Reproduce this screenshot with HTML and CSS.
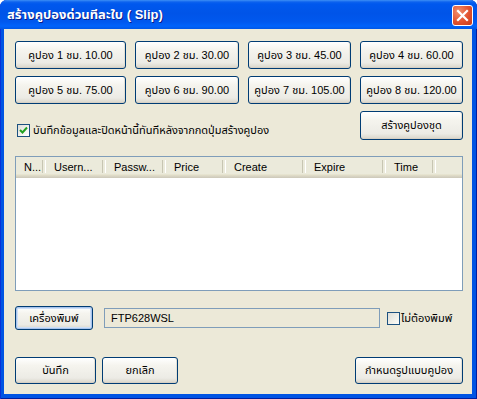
FILE: index.html
```html
<!DOCTYPE html>
<html lang="th">
<head>
<meta charset="utf-8">
<title>Slip</title>
<link rel="stylesheet" href="styles.css">
</head>
<body>
<div class="window">
  <div class="titlebar">
    <span class="title">สร้างคูปองด่วนทีละใบ ( Slip)</span>
    <span class="close"><svg width="13" height="13" viewBox="0 0 13 13"><path d="M2 2 L11 11 M11 2 L2 11" stroke="#fff" stroke-width="2.2" stroke-linecap="square"/></svg></span>
  </div>
  <div class="client">
    <div class="coupons">
      <button class="btn">คูปอง 1 ชม. 10.00</button>
      <button class="btn">คูปอง 2 ชม. 30.00</button>
      <button class="btn">คูปอง 3 ชม. 45.00</button>
      <button class="btn">คูปอง 4 ชม. 60.00</button>
      <button class="btn">คูปอง 5 ชม. 75.00</button>
      <button class="btn">คูปอง 6 ชม. 90.00</button>
      <button class="btn">คูปอง 7 ชม. 105.00</button>
      <button class="btn">คูปอง 8 ชม. 120.00</button>
    </div>
    <div class="optrow">
      <label class="check">
        <span class="box checked"><svg width="9" height="9" viewBox="0 0 9 9"><path d="M1 4 L3.5 6.5 L8 1.5" fill="none" stroke="#21a121" stroke-width="2"/></svg></span>
        <span>บันทึกข้อมูลและปิดหน้านี้ทันทีหลังจากกดปุ่มสร้างคูปอง</span>
      </label>
      <button class="btn batch">สร้างคูปองชุด</button>
    </div>
    <div class="list">
      <div class="head">
        <span class="col c1">N...</span>
        <span class="col c2">Usern...</span>
        <span class="col c3">Passw...</span>
        <span class="col c4">Price</span>
        <span class="col c5">Create</span>
        <span class="col c6">Expire</span>
        <span class="col c7">Time</span>
      </div>
      <div class="body"></div>
    </div>
    <div class="printrow">
      <button class="btn default printer">เครื่องพิมพ์</button>
      <div class="field">FTP628WSL</div>
      <label class="check noprint">
        <span class="box"></span>
        <span>ไม่ต้องพิมพ์</span>
      </label>
    </div>
    <div class="bottomrow">
      <button class="btn save">บันทึก</button>
      <button class="btn cancel">ยกเลิก</button>
      <span class="spacer"></span>
      <button class="btn format">กำหนดรูปแบบคูปอง</button>
    </div>
  </div>
</div>
</body>
</html>
```

FILE: styles.css
```css
* { box-sizing: border-box; }
html, body { margin: 0; padding: 0; }
body {
  width: 477px;
  height: 399px;
  overflow: hidden;
  font-family: "Liberation Sans", "Noto Sans Thai", "Tahoma", sans-serif;
  font-size: 11px;
  color: #000;
}
.window {
  width: 477px;
  height: 399px;
  display: flex;
  flex-direction: column;
  background: #0054e3;
  box-shadow: inset 1px 0 0 #0831d9, inset -1px 0 0 #001ea0, inset 0 -1px 0 #001ea0;
  border-radius: 7px 7px 0 0;
  overflow: hidden;
}
.titlebar {
  height: 29px;
  flex: none;
  display: flex;
  align-items: center;
  padding: 0 4px 0 7px;
  background: linear-gradient(to bottom, #3d8ff5 0, #0d62ee 2px, #0058ee 4px, #0054e8 45%, #0058ee 75%, #0063fb 90%, #0057e6 100%);
}
.title {
  flex: 1;
  color: #fff;
  font-weight: bold;
  font-size: 13px;
  text-shadow: 1px 1px 0 #0a1e8a;
  padding-top: 1px;
}
.close {
  width: 21px;
  height: 21px;
  border: 1px solid #fff;
  border-radius: 3px;
  background: radial-gradient(circle at 30% 30%, #f0906e 0, #e2522f 55%, #c53b1c 100%);
  display: flex;
  align-items: center;
  justify-content: center;
  margin-top: 2px;
}
.client {
  flex: 1;
  margin: 0 5px 5px 4px;
  background: #ece9d8;
  padding: 12px 9px 10px 11px;
  display: flex;
  flex-direction: column;
}
.btn {
  font: inherit;
  color: #000;
  border: 1px solid #003c74;
  border-radius: 3px;
  background: linear-gradient(to bottom, #ffffff 0, #f5f4ee 30%, #ecebe5 80%, #d9d5c9 100%);
  padding: 0;
  margin: 0;
  white-space: nowrap;
  box-shadow: inset 0 -1px 0 #d6d0c5, inset -1px 0 0 #e3e0d4;
}
.btn.default {
  box-shadow: inset 0 0 0 1px #a8c4ec, inset 0 0 0 2px #cddff7;
}
.coupons {
  display: grid;
  grid-template-columns: 111px 104px 103px 103px;
  grid-template-rows: 28px 28px;
  column-gap: 9px;
  row-gap: 7px;
}
.optrow {
  display: flex;
  align-items: flex-end;
  justify-content: space-between;
  margin-top: 7px;
}
.check {
  display: flex;
  align-items: center;
  gap: 3px;
}
.optrow .check { margin-left: 2px; margin-bottom: 1px; }
.box {
  width: 13px;
  height: 13px;
  border: 1px solid #1c5180;
  background: linear-gradient(135deg, #dcdcd7 0, #f4f4f0 60%, #ffffff 100%);
  display: flex;
  align-items: center;
  justify-content: center;
  flex: none;
}
.batch {
  width: 103px;
  height: 29px;
}
.list {
  margin-top: 16px;
  height: 135px;
  border: 1px solid #7f9db9;
  background: #fff;
  display: flex;
  flex-direction: column;
}
.head {
  height: 21px;
  flex: none;
  display: flex;
  background: linear-gradient(to bottom, #ebeadb 0, #ebeadb 80%, #e2dec8 86%, #d6d2c2 93%, #cbc7b8 100%);
}
.col {
  display: flex;
  align-items: center;
  padding-left: 8px;
  padding-bottom: 1px;
  position: relative;
  white-space: nowrap;
  overflow: hidden;
}
.col::after {
  content: "";
  position: absolute;
  right: 0;
  top: 3px;
  bottom: 5px;
  width: 2px;
  border-left: 1px solid #c7c5b2;
  border-right: 1px solid #fff;
}
.c1 { width: 30px; }
.c2 { width: 60px; }
.c3 { width: 60px; }
.c4 { width: 60px; }
.c5 { width: 80px; }
.c6 { width: 80px; }
.c7 { width: 50px; }
.body { flex: 1; }
.printrow {
  display: flex;
  align-items: center;
  margin-top: 15px;
}
.printer {
  width: 78px;
  height: 24px;
}
.field {
  margin-left: 11px;
  width: 276px;
  height: 20px;
  border: 1px solid #7f9db9;
  background: #ece9d8;
  display: flex;
  align-items: center;
  padding-left: 6px;
}
.noprint { margin-left: 7px; gap: 1px; }
.noprint .box {
  background: linear-gradient(135deg, #dcdcd7 0, #f0f0ea 60%, #fbfbf9 100%);
}
.bottomrow {
  margin-top: auto;
  display: flex;
  align-items: center;
}
.save { width: 81px; height: 27px; }
.cancel { width: 76px; height: 27px; margin-left: 6px; }
.spacer { flex: 1; }
.format { width: 108px; height: 27px; }
```
